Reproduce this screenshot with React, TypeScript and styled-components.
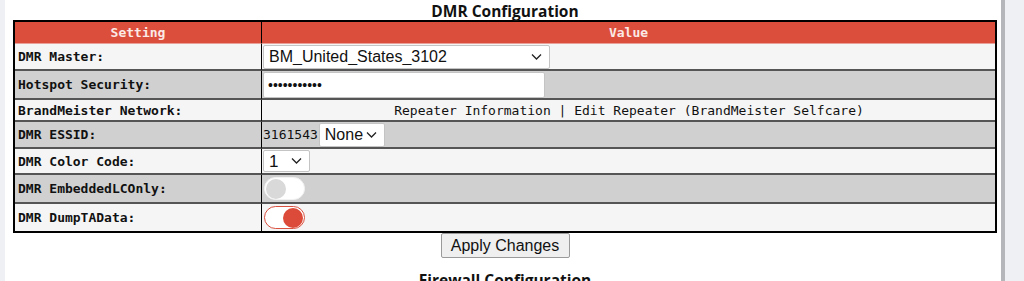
import styled, { createGlobalStyle } from "styled-components";

const GlobalStyle = createGlobalStyle`
  body {
    margin: 0;
    background: #eef0f4;
    font-family: "Liberation Sans", Arial, sans-serif;
  }
`;

const Page = styled.div`
  margin-left: 5px;
  width: 984px;
  min-height: 281px;
  padding: 0 4px 0 8px;
  background: #fff;
  border-right: 4px solid #b4b6ba;
`;

const SectionTitle = styled.div`
  height: 20px;
  line-height: 22px;
  text-align: center;
  font-family: "Open Sans", sans-serif;
  font-weight: 700;
  font-size: 15.5px;
  color: #111;
`;

const Table = styled.table`
  width: 984px;
  border: 2px solid #000;
  border-spacing: 0;
  border-collapse: separate;
  table-layout: fixed;
  font-family: "DejaVu Sans Mono", "Liberation Mono", monospace;
  font-size: 13px;
  color: #111;
`;

const HeadCell = styled.th<{ $first?: boolean }>`
  width: ${(p) => (p.$first ? "246px" : "auto")};
  height: 21px;
  padding: 0;
  background: #dc4e3c;
  color: #fbe9e6;
  font-weight: 700;
  font-size: 13px;
  text-align: center;
  border-right: ${(p) => (p.$first ? "1px solid #000" : "0")};
  border-bottom: 1px solid #e7a198;
`;

const Row = styled.tr<{ $alt?: boolean }>`
  background: ${(p) => (p.$alt ? "#d0d0d0" : "#f5f5f5")};
`;

const LabelCell = styled.td<{ $h: number; $last?: boolean }>`
  height: ${(p) => p.$h}px;
  padding: 0 0 0 3px;
  font-weight: 700;
  border-right: 1px solid #000;
  border-bottom: ${(p) => (p.$last ? "0" : "2px solid #555")};
`;

const ValueCell = styled.td<{ $h: number; $last?: boolean; $center?: boolean }>`
  height: ${(p) => p.$h}px;
  padding: 0 0 0 1px;
  text-align: ${(p) => (p.$center ? "center" : "left")};
  border-bottom: ${(p) => (p.$last ? "0" : "2px solid #555")};
`;

const Inline = styled.div`
  display: flex;
  align-items: center;
`;

const SelectWrap = styled.div<{ $w: number; $h: number }>`
  position: relative;
  width: ${(p) => p.$w}px;
  height: ${(p) => p.$h}px;
  svg {
    position: absolute;
    right: 8px;
    top: 50%;
    transform: translateY(-50%);
    pointer-events: none;
  }
`;

const Select = styled.select<{ $size?: number }>`
  appearance: none;
  width: 100%;
  height: 100%;
  box-sizing: border-box;
  padding: 0 0 0 5px;
  border: 1px solid #c4c4c4;
  border-radius: 2px;
  background: #fff;
  font-family: "Liberation Sans", Arial, sans-serif;
  font-size: ${(p) => p.$size ?? 16}px;
  color: #111;
`;

const PasswordInput = styled.input`
  width: 282px;
  height: 26px;
  box-sizing: border-box;
  margin-top: 1px;
  padding: 0 4px;
  border: 1px solid #c4c4c4;
  border-radius: 2px;
  background: #fff;
  font-size: 14px;
  color: #111;
`;

const EssidText = styled.span`
  font-size: 13px;
  margin-right: 1px;
`;

const Toggle = styled.div<{ $on?: boolean }>`
  width: 41px;
  height: 23px;
  box-sizing: border-box;
  margin-left: 1px;
  border-radius: 12px;
  background: #fff;
  border: 1px solid ${(p) => (p.$on ? "#d9503f" : "#f2f2f2")};
  display: flex;
  align-items: center;
  justify-content: ${(p) => (p.$on ? "flex-end" : "flex-start")};
  padding: 0 1px;
`;

const Knob = styled.span<{ $on?: boolean }>`
  width: 20px;
  height: 20px;
  border-radius: 50%;
  background: ${(p) => (p.$on ? "#dc4b3a" : "#d9d9d9")};
`;

const ButtonRow = styled.div`
  display: flex;
  justify-content: center;
`;

const Button = styled.button`
  width: 129px;
  height: 25px;
  padding: 0;
  border: 1px solid #9a9a9a;
  border-radius: 2px;
  background: #efefef;
  font-family: "Liberation Sans", Arial, sans-serif;
  font-size: 16px;
  color: #111;
`;

const NextTitle = styled(SectionTitle)`
  margin-top: 11px;
`;

const Chevron = () => (
  <svg width="11" height="7" viewBox="0 0 11 7">
    <path d="M1 1l4.5 4.5L10 1" fill="none" stroke="#222" strokeWidth="1.3" />
  </svg>
);

export default function App() {
  return (
    <>
      <GlobalStyle />
      <Page>
        <SectionTitle>DMR Configuration</SectionTitle>
        <Table>
          <thead>
            <tr>
              <HeadCell $first>Setting</HeadCell>
              <HeadCell>Value</HeadCell>
            </tr>
          </thead>
          <tbody>
            <Row>
              <LabelCell $h={25}>DMR Master:</LabelCell>
              <ValueCell $h={25}>
                <SelectWrap $w={287} $h={24}>
                  <Select defaultValue="bm">
                    <option value="bm">BM_United_States_3102</option>
                  </Select>
                  <Chevron />
                </SelectWrap>
              </ValueCell>
            </Row>
            <Row $alt>
              <LabelCell $h={27}>Hotspot Security:</LabelCell>
              <ValueCell $h={27}>
                <PasswordInput type="password" defaultValue="xxxxxxxxxxx" />
              </ValueCell>
            </Row>
            <Row>
              <LabelCell $h={20}>BrandMeister Network:</LabelCell>
              <ValueCell $h={20} $center>
                Repeater Information | Edit Repeater (BrandMeister Selfcare)
              </ValueCell>
            </Row>
            <Row $alt>
              <LabelCell $h={25}>DMR ESSID:</LabelCell>
              <ValueCell $h={25}>
                <Inline>
                  <EssidText>3161543</EssidText>
                  <SelectWrap $w={66} $h={24}>
                    <Select $size={16} defaultValue="none">
                      <option value="none">None</option>
                    </Select>
                    <Chevron />
                  </SelectWrap>
                </Inline>
              </ValueCell>
            </Row>
            <Row>
              <LabelCell $h={24}>DMR Color Code:</LabelCell>
              <ValueCell $h={24}>
                <SelectWrap $w={47} $h={22}>
                  <Select $size={17} defaultValue="1">
                    <option value="1">1</option>
                  </Select>
                  <Chevron />
                </SelectWrap>
              </ValueCell>
            </Row>
            <Row $alt>
              <LabelCell $h={27}>DMR EmbeddedLCOnly:</LabelCell>
              <ValueCell $h={27}>
                <Toggle>
                  <Knob />
                </Toggle>
              </ValueCell>
            </Row>
            <Row>
              <LabelCell $h={27} $last>
                DMR DumpTAData:
              </LabelCell>
              <ValueCell $h={27} $last>
                <Toggle $on>
                  <Knob $on />
                </Toggle>
              </ValueCell>
            </Row>
          </tbody>
        </Table>
        <ButtonRow>
          <Button>Apply Changes</Button>
        </ButtonRow>
        <NextTitle>Firewall Configuration</NextTitle>
      </Page>
    </>
  );
}
